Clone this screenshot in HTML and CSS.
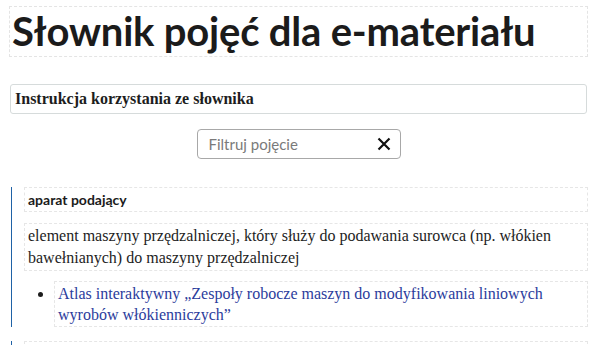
FILE: index.html
```html
<!DOCTYPE html>
<html lang="pl">
<head>
<meta charset="utf-8">
<title>Słownik pojęć dla e-materiału</title>
<link rel="stylesheet" href="styles.css">
</head>
<body>
	<h1 class="glossary_title">Słownik pojęć dla e-materiału</h1>

	<div class="glossary_help">Instrukcja korzystania ze słownika</div>

	<div class="glossary_filter">
		<div class="filter_box">
			<input type="text" class="filter_input" placeholder="Filtruj pojęcie">
			<button class="filter_clear" type="button" aria-label="Wyczyść">
				<svg width="14" height="14" viewBox="0 0 14 14"><path d="M1.5 1.5 L12.5 12.5 M12.5 1.5 L1.5 12.5" stroke="#111" stroke-width="2.2" fill="none"/></svg>
			</button>
		</div>
	</div>

	<div class="glossary_list">
		<div class="entry">
			<div class="entry_term">aparat podający</div>
			<div class="entry_def">element maszyny przędzalniczej, który służy do podawania surowca (np. włókien bawełnianych) do maszyny przędzalniczej</div>
			<ul class="entry_links">
				<li><a href="#">Atlas interaktywny „Zespoły robocze maszyn do modyfikowania liniowych wyrobów włókienniczych”</a></li>
			</ul>
		</div>
		<div class="entry">
			<div class="entry_term">bęben zgrzeblarki</div>
			<div class="entry_def">główny zespół roboczy zgrzeblarki</div>
		</div>
	</div>
</body>
</html>
```

FILE: styles.css
```css
html {
 background:#fff;
}
body {
 margin:0;
 padding:6px 14px 0 9px;
 color:#1d1d1d;
 font:normal 16px "Liberation Serif",serif;
}

.glossary_title {
	margin:0;
	padding:0 2px;
	border:1px dashed #e4e4e4;
	font:bold 40px/49px Lato,"Noto Sans",sans-serif;
	letter-spacing:-0.2px;
	white-space:nowrap;
	color:#1b1b1b;
}

.glossary_help {
	margin:27px 1px 0 1px;
	padding:0 4px;
	height:28px;
	line-height:28px;
	border:1px solid #d6dbdb;
	border-radius:3px;
	font-weight:bold;
	font-size:16px;
}

.glossary_filter {
	margin-top:15px;
	display:flex;
	justify-content:center;
}
.filter_box {
	width:202px;
	height:28px;
	border:1px solid #a8a8a8;
	border-radius:4px;
	display:flex;
	align-items:center;
}
.filter_input {
	flex:1;
	min-width:0;
	border:0;
	outline:0;
	background:transparent;
	padding:0 0 0 11px;
	font:15px Lato,"Noto Sans",sans-serif;
	color:#333;
}
.filter_input::placeholder {
	color:#7a7a7a;
}
.filter_clear {
	border:0;
	background:transparent;
	padding:0;
	margin-right:9px;
	width:14px;
	height:14px;
	display:flex;
}

.glossary_list {
	margin-top:28px;
}
.entry {
	margin-left:2px;
	padding-left:12px;
	border-left:1px solid #1f62a6;
	margin-bottom:14px;
}
.entry_term {
	border:1px dashed #e6e6e6;
	padding:0 3px;
	font:bold 14px/23px Lato,"Noto Sans",sans-serif;
	color:#1b1b1b;
}
.entry_def {
	margin-top:11px;
	border:1px dashed #e6e6e6;
	padding:1px 3px;
	line-height:22px;
	font-size:16px;
}
.entry_links {
	margin:10px 0 0 0;
	padding-left:30px;
}
.entry_links li {
	border:1px dashed #e6e6e6;
	padding:1px 3px;
	line-height:21px;
	font-size:16px;
}
.entry_links a {
	color:#2b3c9c;
	text-decoration:none;
}
```
